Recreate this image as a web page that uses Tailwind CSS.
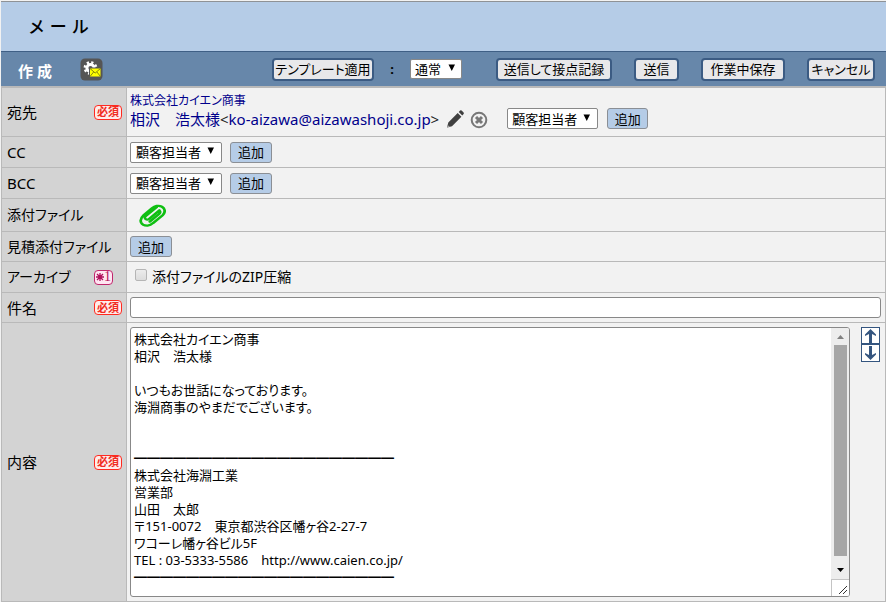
<!DOCTYPE html>
<html lang="ja">
<head>
<meta charset="utf-8">
<title>メール</title>
<meta name="viewport" content="width=device-width, initial-scale=1">
<script src="https://cdn.jsdelivr.net/npm/@tailwindcss/browser@4"></script>
</head>
<body class="min-h-screen bg-[#f2f2f2] pt-px font-['Noto_Sans','Noto_Sans_CJK_JP',sans-serif] text-[15px] leading-5 text-black [font-feature-settings:'palt']">
<svg class="hidden" aria-hidden="true">
  <symbol id="caret" viewBox="0 0 8 8"><path d="M.5 .5h6.500L3.750 7z"/></symbol>
</svg>
<form class="ml-px flex flex-col">
  <header class="flex h-[50px] items-center border-t border-[#8f9296] bg-[#b5cce7] pl-7">
    <h1 class="flex gap-1.5 text-[17px] font-medium leading-6"><span>メ</span><span>ー</span><span>ル</span></h1>
  </header>
  <div class="flex h-[35px] items-center border-t border-[#3f5f85] bg-[#6787aa] pr-[11px] pl-[17px]">
    <h2 class="pt-1 text-[15px] font-bold text-white">作 成</h2>
    <button type="button" aria-label="設定" class="ml-7 shrink-0">
      <svg width="23" height="23" viewBox="0 0 23 23">
        <rect x=".5" y=".5" width="22" height="22" rx="4.500" fill="#555"/>
        <circle cx="10.500" cy="10" r="5.700" fill="none" stroke="#fff" stroke-width="2.400" stroke-dasharray="2.240 2.240"/>
        <circle cx="10.500" cy="10" r="3.600" fill="none" stroke="#fff" stroke-width="3"/>
        <rect x="9" y="9.500" width="12" height="9.500" fill="#555"/>
        <rect x="10" y="10.500" width="10.500" height="8" fill="#ff0"/>
        <path d="M10 10.500l5.200 4.500 5.300-4.500M10 18.500l3.600-4.500M20.500 18.500l-3.600-4.500" fill="none" stroke="#77770a" stroke-width=".9"/>
      </svg>
    </button>
    <div class="ml-auto flex shrink-0 items-center text-[13px]">
      <button type="button" class="h-[23px] w-[102px] rounded-[4px] border-2 border-[#3b5b83] bg-[#e8e8ea] leading-4 whitespace-nowrap">テンプレート適用</button>
      <label for="priority" class="w-9 text-center font-bold">:</label>
      <div class="relative">
        <select id="priority" class="h-5 w-[52px] appearance-none rounded-[2px] border border-[#888] bg-white pl-1 text-[13px] leading-4"><option>通常</option></select>
        <svg class="pointer-events-none absolute top-[5px] right-[6px]" width="8" height="8"><use href="#caret"/></svg>
      </div>
      <div class="ml-[34px] flex gap-[22px]">
        <button type="submit" class="h-[23px] w-[116px] rounded-[4px] border-2 border-[#3b5b83] bg-[#e8e8ea] leading-4 whitespace-nowrap">送信して接点記録</button>
        <button type="submit" class="h-[23px] w-[45px] rounded-[4px] border-2 border-[#3b5b83] bg-[#e8e8ea] leading-4 whitespace-nowrap">送信</button>
        <button type="button" class="h-[23px] w-[84px] rounded-[4px] border-2 border-[#3b5b83] bg-[#e8e8ea] leading-4 whitespace-nowrap">作業中保存</button>
        <button type="button" class="h-[23px] w-[68px] rounded-[4px] border-2 border-[#3b5b83] bg-[#e8e8ea] leading-4 whitespace-nowrap">キャンセル</button>
      </div>
    </div>
  </div>

  <div class="grid grid-cols-[125px_1fr] border-t-2 border-r border-l border-[#b9b9b9]">
    <!-- 宛先 -->
    <div class="flex h-[49px] items-center justify-between border-r border-b border-[#b9b9b9] bg-[#d3d3d3] pr-1 pl-[5px]">
      <label for="to">宛先</label>
      <span class="flex h-[15px] w-7 items-center justify-center rounded-[4px] border border-[#ff2a20] bg-[#ffeceb] text-[11px] leading-3 font-bold text-[#f02c22]">必須</span>
    </div>
    <div class="flex items-end border-b border-[#b9b9b9] pb-[7px] pl-[3px]">
      <div class="text-[#00008b]">
        <a href="#" class="block text-[12px] leading-[17px]">株式会社カイエン商事</a>
        <div class="leading-5 whitespace-nowrap"><a href="#">相沢　浩太様</a><a href="#"><span class="text-[#222]">&lt;</span>ko-aizawa@aizawashoji.co.jp<span class="text-[#222]">&gt;</span></a></div>
      </div>
      <button type="button" aria-label="編集" class="ml-[7px]">
        <svg width="19" height="20" viewBox="0 0 19 20"><path d="M1 18.500l1.300-5L11.700 4l3.700 3.700L6 17.200zM12.700 3l1.400-1.400q.8-.6 1.500 0l2 2q.7.8 0 1.500l-1.300 1.500z" fill="#404040"/><path d="M1.800 16l2 2-2.800.5z" fill="#aaa"/></svg>
      </button>
      <button type="button" aria-label="削除" class="ml-[5px]">
        <svg width="18" height="18" viewBox="0 0 18 18" fill="none" stroke="#777"><circle cx="9" cy="9" r="7.300" stroke-width="2"/><path d="M6 6l6 6M12 6l-6 6" stroke-width="3"/></svg>
      </button>
      <div class="relative ml-[19px]">
        <select id="to" class="h-[21px] w-[91px] appearance-none rounded-[2px] border border-[#888] bg-white pl-1 text-[13px] leading-4"><option>顧客担当者</option></select>
        <svg class="pointer-events-none absolute top-[6px] right-[7px]" width="8" height="8"><use href="#caret"/></svg>
      </div>
      <button type="button" class="ml-[9px] h-[21px] w-[41px] rounded-[3px] border border-[#8b8f95] bg-[#b5cce7] text-[13px] leading-4">追加</button>
    </div>

    <!-- CC -->
    <div class="flex h-[31px] items-center border-r border-b border-[#b9b9b9] bg-[#d3d3d3] pl-[5px]">
      <label for="cc">CC</label>
    </div>
    <div class="flex items-center border-b border-[#b9b9b9] pl-[3px]">
      <div class="relative">
        <select id="cc" class="h-[21px] w-[92px] appearance-none rounded-[2px] border border-[#888] bg-white pl-[5px] text-[13px] leading-4"><option>顧客担当者</option></select>
        <svg class="pointer-events-none absolute top-[6px] right-[7px]" width="8" height="8"><use href="#caret"/></svg>
      </div>
      <button type="button" class="ml-2 h-[21px] w-[42px] rounded-[3px] border border-[#8b8f95] bg-[#b5cce7] text-[13px] leading-4">追加</button>
    </div>

    <!-- BCC -->
    <div class="flex h-[31px] items-center border-r border-b border-[#b9b9b9] bg-[#d3d3d3] pl-[5px]">
      <label for="bcc">BCC</label>
    </div>
    <div class="flex items-center border-b border-[#b9b9b9] pl-[3px]">
      <div class="relative">
        <select id="bcc" class="h-[21px] w-[92px] appearance-none rounded-[2px] border border-[#888] bg-white pl-[5px] text-[13px] leading-4"><option>顧客担当者</option></select>
        <svg class="pointer-events-none absolute top-[6px] right-[7px]" width="8" height="8"><use href="#caret"/></svg>
      </div>
      <button type="button" class="ml-2 h-[21px] w-[42px] rounded-[3px] border border-[#8b8f95] bg-[#b5cce7] text-[13px] leading-4">追加</button>
    </div>

    <!-- 添付ファイル -->
    <div class="flex h-[33px] items-center border-r border-b border-[#b9b9b9] bg-[#d3d3d3] pl-[5px] text-[14px]">添付ファイル</div>
    <div class="flex items-center border-b border-[#b9b9b9] pl-3">
      <button type="button" aria-label="添付ファイル">
        <svg width="27" height="23" viewBox="0.500 0 22.500 23.500" preserveAspectRatio="none" fill="none" stroke="#0fbf12" stroke-width="2.300" stroke-linecap="round"><path d="M17.500 6.500l-8.700 8.800a2 2 0 0 1-2.830-2.830l9.200-9.190M4.500 11.200q-3.500 4-2.300 7.500 1.300 3.500 5.500 3.300 2.500-.3 4.500-2.500l8-8q2.800-3.500 1-7-2-3.300-6-2.500-2 .5-4 2.500L4.500 11.200M17.500 6.500q1.500 1.800-.5 4L9.500 18"/></svg>
      </button>
    </div>

    <!-- 見積添付ファイル -->
    <div class="flex h-[30px] items-center border-r border-b border-[#b9b9b9] bg-[#d3d3d3] pl-[5px] text-[14px] whitespace-nowrap">見積添付ファイル</div>
    <div class="flex items-center border-b border-[#b9b9b9] pl-[3px]">
      <button type="button" class="h-[21px] w-[42px] rounded-[3px] border border-[#8b8f95] bg-[#b5cce7] text-[13px] leading-4">追加</button>
    </div>

    <!-- アーカイブ -->
    <div class="flex h-[31px] items-center border-r border-b border-[#b9b9b9] bg-[#d3d3d3] pr-[13px] pl-[5px] text-[14px]">
      <span>アーカイブ</span>
      <span class="ml-auto flex h-[15px] w-[19px] items-center justify-center rounded-[4px] border border-[#c0266c] bg-[#ffe6f2] font-['Liberation_Serif','Noto_Sans_CJK_JP',serif] text-[14px] leading-3 text-[#b0105c]"><svg width="8" height="8" viewBox="0 0 8 8" stroke="currentColor" stroke-width="1.300"><path d="M4 0v8M0 4h8M1 1l6 6M7 1L1 7"/></svg>1</span>
    </div>
    <div class="flex items-center border-b border-[#b9b9b9] pl-2">
      <input id="zip" type="checkbox" class="mb-1 size-3 appearance-none rounded-[2px] border border-[#b5b5b5] bg-linear-to-b from-[#ececec] to-[#dcdcdc]">
      <label for="zip" class="ml-[5px] text-[14px]">添付ファイルのZIP圧縮</label>
    </div>

    <!-- 件名 -->
    <div class="flex h-[30px] items-center justify-between border-r border-b border-[#b9b9b9] bg-[#d3d3d3] pr-1 pl-[5px]">
      <label for="subject">件名</label>
      <span class="flex h-[15px] w-7 items-center justify-center rounded-[4px] border border-[#ff2a20] bg-[#ffeceb] text-[11px] leading-3 font-bold text-[#f02c22]">必須</span>
    </div>
    <div class="flex items-center border-b border-[#b9b9b9] pr-1 pl-[3px]">
      <input id="subject" type="text" class="h-[21px] w-full rounded-[3px] border border-[#888] bg-white px-1 text-[13px]">
    </div>

    <!-- 内容 -->
    <div class="flex h-[279px] items-center justify-between border-r border-b border-[#b9b9b9] bg-[#d3d3d3] pr-1 pl-[5px]">
      <label for="body">内容</label>
      <span class="flex h-[15px] w-7 items-center justify-center rounded-[4px] border border-[#ff2a20] bg-[#ffeceb] text-[11px] leading-3 font-bold text-[#f02c22]">必須</span>
    </div>
    <div class="flex items-start gap-[11px] border-b border-[#b9b9b9] pt-1 pr-[5px] pl-[3px]">
      <div class="flex h-[270px] min-w-0 grow overflow-hidden rounded-[3px] border border-[#888] bg-white">
        <textarea id="body" class="block min-w-0 grow resize-none overflow-hidden py-[3px] pl-[3px] text-[13px] leading-[17px]">株式会社カイエン商事
相沢　浩太様

いつもお世話になっております。
海淵商事のやまだでございます。


━━━━━━━━━━━━━━━━━━━━
株式会社海淵工業
営業部
山田　太郎
〒151-0072　東京都渋谷区幡ヶ谷2-27-7
ワコーレ幡ヶ谷ビル5F
TEL : 03-5333-5586　http://www.caien.co.jp/
━━━━━━━━━━━━━━━━━━━━</textarea>
        <div class="flex w-[18px] shrink-0 flex-col items-center bg-[#ededed]" aria-hidden="true">
          <svg width="17" height="17" viewBox="0 0 17 17"><path d="M5 11h7L8.500 7z" fill="#808080"/></svg>
          <div class="w-[13px] grow bg-[#a6a6a6]"></div>
          <svg width="17" height="23" viewBox="0 0 17 23"><path d="M5 12h7l-3.500 4z"/></svg>
          <div class="h-[17px] w-full border-t border-l border-[#c4c4c4] bg-white">
            <svg width="17" height="16" viewBox="0 0 17 16" stroke="#333" fill="none"><path d="M7 14l8-8M11 14l4-4"/></svg>
          </div>
        </div>
      </div>
      <div class="flex w-[19px] shrink-0 flex-col border border-[#34557f] bg-white text-[#34557f]">
        <button type="button" aria-label="縮小" class="flex h-[17px] items-center justify-center border-b-2 border-[#34557f]">
          <svg width="11" height="14" viewBox="0 0 11 14" fill="currentColor"><path d="M5.500 0L11 5.500V7L7 5V14H4V5L0 7V5.500z"/></svg>
        </button>
        <button type="button" aria-label="拡大" class="flex h-4 items-center justify-center">
          <svg width="11" height="14" viewBox="0 0 11 14" fill="currentColor"><path d="M5.500 14L11 8.500V7L7 9V0H4v9L0 7V8.500z"/></svg>
        </button>
      </div>
    </div>
  </div>
</form>
</body>
</html>
